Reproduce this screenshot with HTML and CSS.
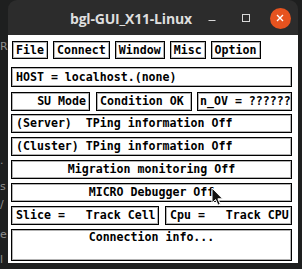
FILE: index.html
```html
<!DOCTYPE html>
<html>
<head>
<meta charset="utf-8">
<link rel="stylesheet" href="styles.css">
</head>
<body>
<div class="desk-left">
  <div class="g g1">R</div>
  <div class="g g2">.</div>
  <div class="g g3">s</div>
  <div class="g g4">/</div>
  <div class="g g5">e</div>
  <div class="g g6">l</div>
</div>
<div class="window">
  <div class="titlebar">
    <div class="title">bgl-GUI_X11-Linux</div>
    <div class="controls">
      <div class="ctl"><svg width="10" height="10" viewBox="0 0 10 10"><line x1="1.5" y1="7.5" x2="8.5" y2="7.5" stroke="#d8d8d8" stroke-width="1"/></svg></div>
      <div class="ctl"><svg width="10" height="10" viewBox="0 0 10 10"><rect x="1.5" y="1.5" width="7" height="7" fill="none" stroke="#d8d8d8" stroke-width="1"/></svg></div>
      <div class="ctl"><div class="close"><svg width="10" height="10" viewBox="0 0 10 10"><path d="M2 2 L8 8 M8 2 L2 8" stroke="#fff" stroke-width="1.4"/></svg></div></div>
    </div>
  </div>
  <div class="content">
    <div class="menu">
      <div class="btn">File</div>
      <div class="btn">Connect</div>
      <div class="btn">Window</div>
      <div class="btn">Misc</div>
      <div class="btn">Option</div>
    </div>
    <div class="row host">HOST = localhost.(none)</div>
    <div class="split su">
      <div class="box su-mode">SU Mode</div>
      <div class="box cond">Condition OK</div>
      <div class="box nov">n_OV = ??????</div>
    </div>
    <div class="row first">(Server)  TPing information Off</div>
    <div class="row">(Cluster) TPing information Off</div>
    <div class="row center">Migration monitoring Off</div>
    <div class="row center micro">MICRO Debugger Off<svg class="cursor" width="13" height="20" viewBox="0 0 13 20"><path d="M1 1 L1 16 L4.6 12.6 L7 18.2 L9.3 17.2 L6.9 11.8 L11.6 11.8 Z" fill="#111" stroke="#fff" stroke-width="1"/></svg></div>
    <div class="split slice-row">
      <div class="box slice">Slice =   Track Cell</div>
      <div class="box cpu">Cpu =   Track CPU</div>
    </div>
    <div class="row center conn">Connection info...</div>
  </div>
</div>
</body>
</html>
```
FILE: styles.css
```css
html, body {
  margin: 0;
  padding: 0;
}
body {
  width: 302px;
  height: 269px;
  overflow: hidden;
  background: #1e1f1f;
  display: flex;
  align-items: flex-start;
}
.desk-left {
  width: 8px;
  height: 269px;
  overflow: hidden;
  flex: none;
  color: #8e8e8e;
  font-family: "DejaVu Sans", sans-serif;
  font-size: 11px;
  line-height: 14px;
}
.g { white-space: pre; }
.g1 { margin-top: 40px; }
.g2 { margin-top: 100px; }
.g3 { margin-top: 12px; }
.g4 { margin-top: 4px; }
.g5 { margin-top: 16px; }
.g6 { margin-top: 11px; }
.window {
  width: 290px;
  flex: none;
  display: flex;
  flex-direction: column;
}
.titlebar {
  height: 35px;
  background: #2c2c2c;
  border-radius: 9px 9px 0 0;
  display: flex;
  align-items: center;
  box-sizing: border-box;
  padding-top: 1px;
}
.title {
  margin-left: 62px;
  font-family: "Open Sans", "Noto Sans", sans-serif;
  font-weight: 700;
  font-size: 14px;
  letter-spacing: -0.2px;
  color: #dedede;
}
.controls {
  margin-left: auto;
  margin-right: 1px;
  display: flex;
}
.ctl {
  width: 34px;
  height: 22px;
  display: flex;
  align-items: center;
  justify-content: center;
}
.close {
  width: 21px;
  height: 21px;
  border-radius: 50%;
  background: #e6531f;
  display: flex;
  align-items: center;
  justify-content: center;
}
.content {
  background: #ffffff;
  height: 228px;
  box-sizing: border-box;
  padding: 6px 6px 0 3px;
  display: flex;
  flex-direction: column;
  font-family: "DejaVu Sans Mono", monospace;
  font-weight: 700;
  font-size: 11.6px;
  color: #000;
  white-space: pre;
}
.menu {
  display: flex;
  gap: 5px;
  margin-left: 1px;
}
.btn, .row, .box {
  border: 1px solid #000;
  box-shadow: inset 0 0 0 1px rgba(0, 0, 0, 0.3);
  box-sizing: border-box;
}
.btn {
  height: 18px;
  line-height: 16px;
  padding: 0 3px;
}
.row {
  height: 19px;
  line-height: 17px;
  padding: 0 4px;
  margin-top: 4px;
  position: relative;
}
.row.host {
  margin-top: 8px;
  height: 20px;
  line-height: 18px;
}
.row.first { margin-top: 3px; }
.center { text-align: center; }
.split {
  display: flex;
  margin-top: 4px;
}
.split.su { margin-top: 5px; }
.box {
  height: 19px;
  line-height: 17px;
}
.su-mode {
  width: 79px;
  text-align: right;
  padding-right: 3px;
}
.cond {
  width: 96px;
  margin-left: 6px;
  padding-left: 3px;
}
.nov {
  flex: 1;
  margin-left: 5px;
  padding-left: 2px;
}
.slice {
  width: 148px;
  padding-left: 4px;
}
.cpu {
  flex: 1;
  margin-left: 6px;
  padding-left: 4px;
}
.conn {
  height: 32px;
  line-height: 15px;
}
.cursor {
  position: absolute;
  left: 199px;
  top: 3px;
}
```
